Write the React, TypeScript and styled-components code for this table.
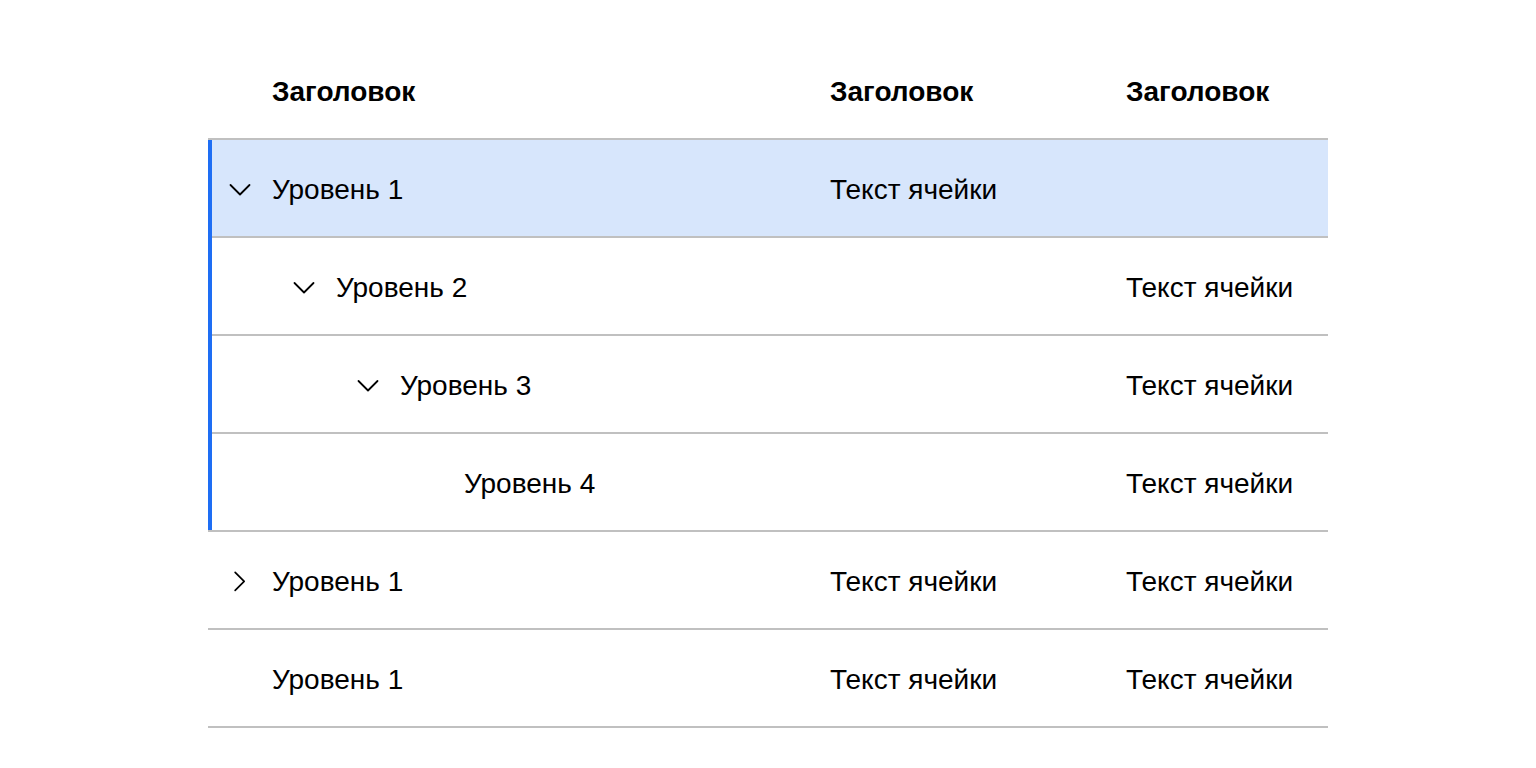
import React from 'react'
import styled, { createGlobalStyle } from 'styled-components'

const GlobalStyle = createGlobalStyle`
  body {
    margin: 0;
    background: #ffffff;
    font-family: "Liberation Sans", Arial, sans-serif;
    color: #000000;
  }
`

const Page = styled.div`
  padding: 42px 208px;
`

const Table = styled.div`
  width: 1120px;
`

// expanded branch gets a blue bar down its left edge
const Branch = styled.div`
  position: relative;

  &::after {
    content: '';
    position: absolute;
    left: 0;
    top: 0;
    bottom: 2px;
    width: 4px;
    background: #1e6ef4;
  }
`

const Row = styled.div<{ $selected?: boolean }>`
  display: grid;
  grid-template-columns: 606px 296px 218px;
  height: 96px;
  align-items: center;
  border-bottom: 2px solid #c0c0c0;
  background: ${p => (p.$selected ? '#d7e6fc' : 'transparent')};
`

const HeadCell = styled.div`
  padding: 4px 16px 0;
  font-size: 28px;
  font-weight: 700;
`

const FirstHead = styled(HeadCell)`
  padding-left: 64px;
`

const Cell = styled.div`
  padding: 4px 16px 0;
  font-size: 28px;
  white-space: nowrap;
`

const TreeCell = styled.div<{ $level: number }>`
  display: flex;
  align-items: center;
  gap: 16px;
  padding-top: 3px;
  padding-left: ${p => 16 + (p.$level - 1) * 64}px;
  font-size: 28px;
  white-space: nowrap;
`

const Label = styled.span`
  padding-top: 1px;
`

const Toggle = styled.span`
  display: flex;
  align-items: center;
  justify-content: center;
  width: 32px;
  height: 32px;
`

type Open = 'open' | 'closed' | 'leaf'

const Chevron = ({ state }: { state: Open }) => {
  if (state === 'leaf') return <Toggle />
  return (
    <Toggle>
      <svg width="24" height="24" viewBox="0 0 24 24" fill="none" stroke="#000" strokeWidth="1.8" strokeLinecap="round" strokeLinejoin="round">
        {state === 'open' ? <path d="M2.5 7 L12 16.5 L21.5 7" /> : <path d="M7 2.5 L16.5 12 L7 21.5" transform="translate(0.5 0) scale(0.95)" />}
      </svg>
    </Toggle>
  )
}

type Item = { level: number; state: Open; a: string; b: string; selected?: boolean }

const branch: Item[] = [
  { level: 1, state: 'open', a: 'Текст ячейки', b: '', selected: true },
  { level: 2, state: 'open', a: '', b: 'Текст ячейки' },
  { level: 3, state: 'open', a: '', b: 'Текст ячейки' },
  { level: 4, state: 'leaf', a: '', b: 'Текст ячейки' },
]

const rest: Item[] = [
  { level: 1, state: 'closed', a: 'Текст ячейки', b: 'Текст ячейки' },
  { level: 1, state: 'leaf', a: 'Текст ячейки', b: 'Текст ячейки' },
]

const TreeRow = ({ r }: { r: Item }) => (
  <Row $selected={r.selected}>
    <TreeCell $level={r.level}>
      <Chevron state={r.state} />
      <Label>Уровень {r.level}</Label>
    </TreeCell>
    <Cell>{r.a}</Cell>
    <Cell>{r.b}</Cell>
  </Row>
)

const App = () => {
  return (
    <Page>
      <GlobalStyle />
      <Table>
        <Row>
          <FirstHead>Заголовок</FirstHead>
          <HeadCell>Заголовок</HeadCell>
          <HeadCell>Заголовок</HeadCell>
        </Row>
        <Branch>
          {branch.map((r, i) => (
            <TreeRow key={i} r={r} />
          ))}
        </Branch>
        {rest.map((r, i) => (
          <TreeRow key={i} r={r} />
        ))}
      </Table>
    </Page>
  )
}

export default App
